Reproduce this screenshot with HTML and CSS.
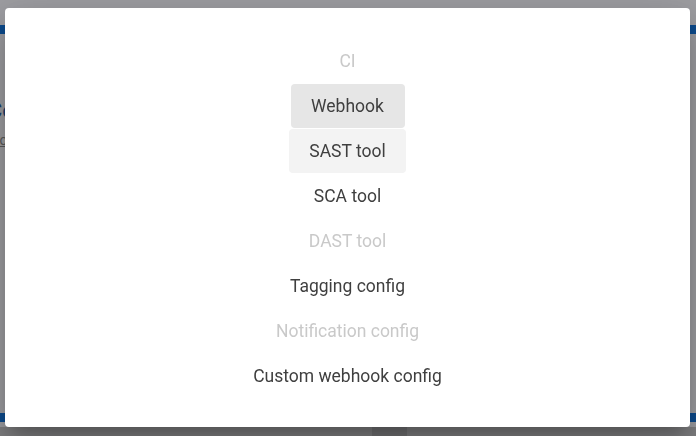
FILE: index.html
```html
<!DOCTYPE html>
<html>
<head>
<meta charset="utf-8">
<link rel="stylesheet" href="styles.css">
</head>
<body>
<div class="page">
  <div class="topbar"></div>
  <div class="title">Co</div>
  <div class="link">Lo</div>
  <div class="spacer"></div>
  <div class="footbar"></div>
  <div class="bottom"><div class="block"></div></div>
</div>
<div class="dialog">
  <ul class="menu">
    <li class="item disabled">CI</li>
    <li class="item active">Webhook</li>
    <li class="item hover">SAST tool</li>
    <li class="item">SCA tool</li>
    <li class="item disabled">DAST tool</li>
    <li class="item">Tagging config</li>
    <li class="item disabled">Notification config</li>
    <li class="item">Custom webhook config</li>
  </ul>
</div>
</body>
</html>
```
FILE: styles.css
```css
html, body {
  margin: 0;
  padding: 0;
  width: 696px;
  height: 436px;
  overflow: hidden;
  background: #9e9ea2;
  font-family: Roboto, "Liberation Sans", sans-serif;
}
.page {
  display: flex;
  flex-direction: column;
  height: 436px;
}
.topbar {
  margin-top: 25px;
  height: 9px;
  background: #0c4b8e;
}
.title {
  margin-top: 64px;
  margin-left: -12px;
  font-size: 22px;
  color: #1a3f6e;
}
.link {
  margin-top: 9px;
  margin-left: -8px;
  font-size: 14px;
  color: #5a5a5a;
  text-decoration: underline;
}
.spacer { flex: 1; }
.footbar {
  height: 9px;
  background: #0c4b8e;
  margin-bottom: 5px;
}
.bottom {
  height: 9px;
  background: #808082;
  display: flex;
}
.block {
  margin-left: 372px;
  width: 35px;
  background: #727274;
}
.dialog {
  position: fixed;
  left: 5px;
  top: 8px;
  width: 685px;
  height: 419px;
  background: #fff;
  border-radius: 4px;
  box-shadow: 0 11px 15px -7px rgba(0,0,0,.2), 0 24px 38px 3px rgba(0,0,0,.14), 0 9px 46px 8px rgba(0,0,0,.12);
  box-sizing: border-box;
  padding-top: 31px;
}
.menu {
  list-style: none;
  margin: 0;
  padding: 0;
  display: flex;
  flex-direction: column;
  align-items: center;
  gap: 1px;
}
.item {
  height: 44px;
  line-height: 44px;
  padding: 0 20px;
  min-width: 74px;
  text-align: center;
  font-size: 17.5px;
  color: #3f3f3f;
  border-radius: 4px;
}
.item.disabled { color: #c9c9c9; }
.item.active { background: #e6e6e6; }
.item.hover { background: #f3f3f3; }
```
